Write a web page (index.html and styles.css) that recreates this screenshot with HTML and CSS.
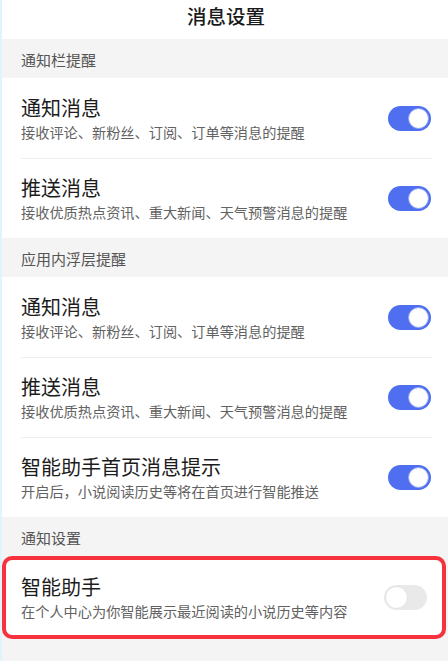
FILE: index.html
```html
<!DOCTYPE html>
<html lang="zh-CN">
<head>
<meta charset="utf-8">
<title>消息设置</title>
<link rel="stylesheet" href="styles.css">
</head>
<body>
<div class="page">
  <header class="topbar">消息设置</header>

  <div class="section-title">通知栏提醒</div>
  <div class="group">
    <div class="row">
      <div class="text">
        <div class="title">通知消息</div>
        <div class="sub">接收评论、新粉丝、订阅、订单等消息的提醒</div>
      </div>
      <span class="toggle on"><span class="knob"></span></span>
    </div>
    <div class="row">
      <div class="text">
        <div class="title">推送消息</div>
        <div class="sub">接收优质热点资讯、重大新闻、天气预警消息的提醒</div>
      </div>
      <span class="toggle on"><span class="knob"></span></span>
    </div>
  </div>

  <div class="section-title">应用内浮层提醒</div>
  <div class="group">
    <div class="row">
      <div class="text">
        <div class="title">通知消息</div>
        <div class="sub">接收评论、新粉丝、订阅、订单等消息的提醒</div>
      </div>
      <span class="toggle on"><span class="knob"></span></span>
    </div>
    <div class="row">
      <div class="text">
        <div class="title">推送消息</div>
        <div class="sub">接收优质热点资讯、重大新闻、天气预警消息的提醒</div>
      </div>
      <span class="toggle on"><span class="knob"></span></span>
    </div>
    <div class="row">
      <div class="text">
        <div class="title">智能助手首页消息提示</div>
        <div class="sub">开启后，小说阅读历史等将在首页进行智能推送</div>
      </div>
      <span class="toggle on"><span class="knob"></span></span>
    </div>
  </div>

  <div class="gray-area">
    <div class="section-title">通知设置</div>
    <div class="row highlight">
      <div class="text">
        <div class="title">智能助手</div>
        <div class="sub">在个人中心为你智能展示最近阅读的小说历史等内容</div>
      </div>
      <span class="toggle off"><span class="knob"></span></span>
    </div>
  </div>
</div>
</body>
</html>
```

FILE: styles.css
```css
* {
  box-sizing: border-box;
  margin: 0;
  padding: 0;
}

html, body {
  background: #f4f4f4;
}

body {
  font-family: "Noto Sans CJK SC", "Noto Sans", sans-serif;
  color: #1c1c1c;
  width: 448px;
  height: 661px;
  overflow: hidden;
}

.page {
  border-left: 2px solid #e1f4fb;
  min-height: 661px;
  background: #f4f4f4;
}

.topbar {
  height: 39px;
  background: #ffffff;
  display: flex;
  justify-content: center;
  align-items: center;
  padding-bottom: 8px;
  padding-left: 2px;
  font-size: 19.5px;
  font-weight: 500;
  color: #1a1a1a;
}

.section-title {
  height: 39px;
  background: #f4f4f4;
  display: flex;
  align-items: center;
  padding-left: 19px;
  padding-top: 2px;
  font-size: 15px;
  color: #555555;
}

.group {
  background: #ffffff;
}

.row {
  height: 80px;
  display: flex;
  align-items: center;
  justify-content: space-between;
  padding: 0 17px 0 19px;
  position: relative;
  background: #ffffff;
}

.group .row + .row::before {
  content: "";
  position: absolute;
  top: 0;
  left: 19px;
  right: 16px;
  height: 1px;
  background: #f0f0f0;
}

.text {
  display: flex;
  flex-direction: column;
  padding-top: 1px;
}

.title {
  font-size: 20px;
  line-height: 26px;
  color: #1c1c1c;
}

.sub {
  font-size: 14.2px;
  line-height: 20px;
  margin-top: 1px;
  color: #626262;
}

.toggle {
  width: 43px;
  height: 25px;
  border-radius: 13px;
  display: flex;
  align-items: center;
  padding: 0 2px;
  flex: none;
}

.toggle.on {
  background: #4f6ff0;
  justify-content: flex-end;
}

.toggle.off {
  background: #e9e9e9;
  justify-content: flex-start;
  padding: 0 1px;
}

.knob {
  width: 21px;
  height: 21px;
  border-radius: 50%;
  background: #ffffff;
}

.toggle.on .knob {
  border: 1px solid #8aa0f6;
}

.toggle.off .knob {
  width: 23px;
  height: 23px;
  border: 1px solid #e3e3e3;
}

.gray-area {
  background: #f4f4f4;
  padding-bottom: 24px;
}

.row.highlight {
  height: 83px;
  margin-right: 2px;
  border: 4px solid #f6323f;
  border-radius: 10px;
  padding: 0 15px;
}

.row.highlight .text {
  padding-top: 0;
}
```
